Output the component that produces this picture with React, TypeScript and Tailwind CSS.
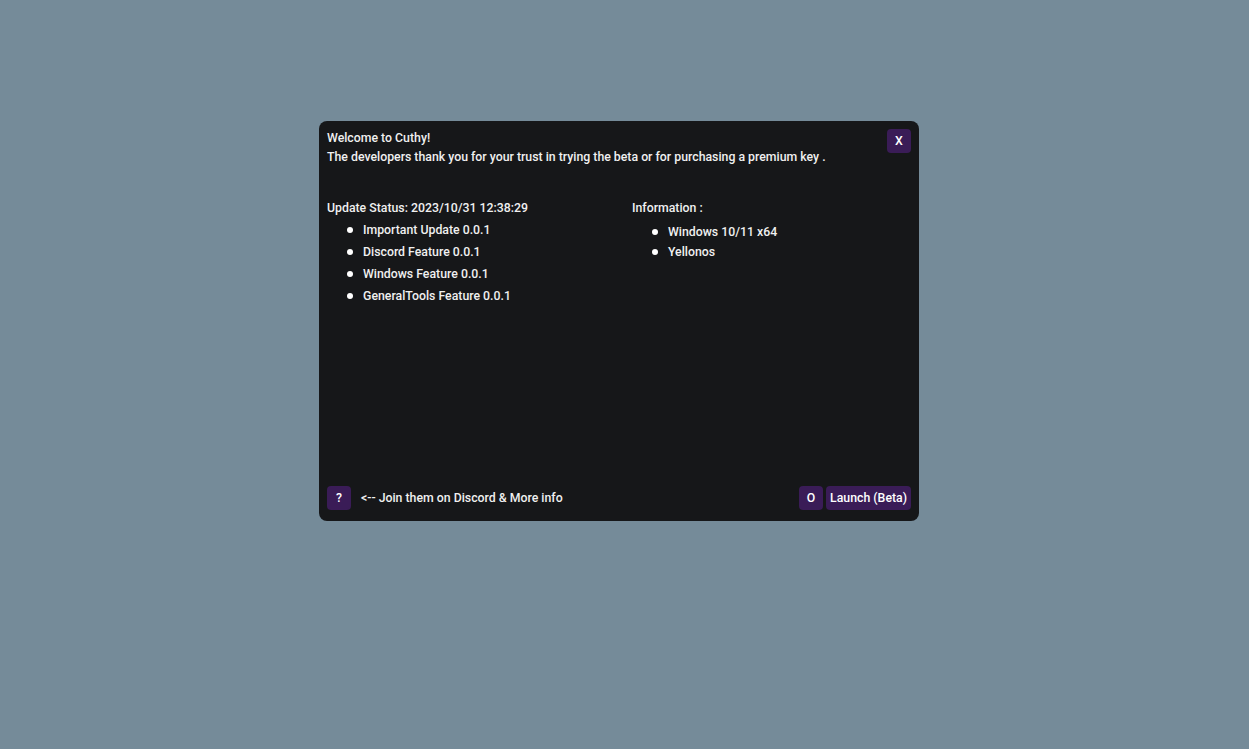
import React from 'react';

const updates = [
  'Important Update 0.0.1',
  'Discord Feature 0.0.1',
  'Windows Feature 0.0.1',
  'GeneralTools Feature 0.0.1',
];

const info = ['Windows 10/11 x64', 'Yellonos'];

const Bullet = ({ text }: { text: string }) => (
  <li className="flex items-center h-[22px]">
    <span className="w-[6px] h-[6px] rounded-full bg-white ml-[20px] mr-[10px]" />
    <span>{text}</span>
  </li>
);

export default function App() {
  return (
    <div
      className="w-full h-[749px] bg-[#758b99] flex items-start pl-[319px] pt-[121px] text-[12.3px] font-medium text-[#f0f0f0]"
      style={{ fontFamily: 'Roboto, "Liberation Sans", sans-serif' }}
    >
      <div className="w-[600px] h-[400px] bg-[#161719] rounded-lg px-2 pt-2 pb-[11px] flex flex-col">
        <div className="flex justify-between">
          <div className="leading-[19px]">
            <p>Welcome to Cuthy!</p>
            <p>The developers thank you for your trust in trying the beta or for purchasing a premium key .</p>
          </div>
          <button className="w-6 h-6 rounded bg-[#3a1c57] text-white">X</button>
        </div>

        <div className="flex mt-[32px]">
          <div className="w-[305px]">
            <p className="leading-[18px]">Update Status: 2023/10/31 12:38:29</p>
            <ul className="mt-[2px]">
              {updates.map((u) => (
                <Bullet key={u} text={u} />
              ))}
            </ul>
          </div>
          <div className="flex-1">
            <p className="leading-[18px]">Information :</p>
            <ul className="mt-[5px]">
              {info.map((u) => (
                <li key={u} className="flex items-center h-[20px]">
                  <span className="w-[6px] h-[6px] rounded-full bg-white ml-[20px] mr-[10px]" />
                  <span>{u}</span>
                </li>
              ))}
            </ul>
          </div>
        </div>

        <div className="mt-auto flex items-center">
          <button className="w-6 h-6 rounded bg-[#3a1c57] text-white">?</button>
          <span className="ml-[10px]">&lt;-- Join them on Discord &amp; More info</span>
          <div className="ml-auto flex gap-[3px]">
            <button className="w-6 h-6 rounded bg-[#3a1c57] text-white">O</button>
            <button className="h-6 px-1 rounded bg-[#3a1c57] text-white">Launch (Beta)</button>
          </div>
        </div>
      </div>
    </div>
  );
}
